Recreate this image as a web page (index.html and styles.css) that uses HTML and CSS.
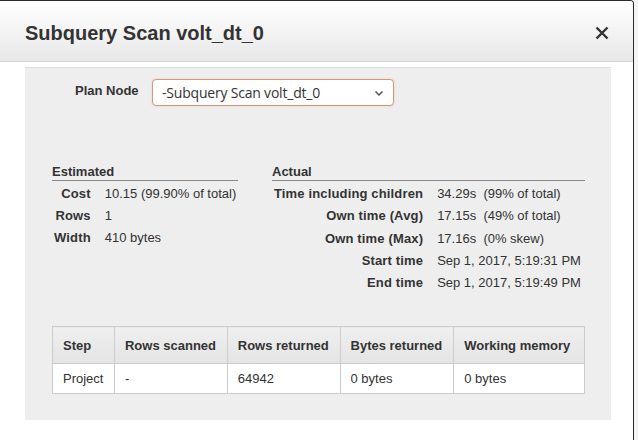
FILE: index.html
```html
<!DOCTYPE html>
<html>
<head>
<meta charset="utf-8">
<link rel="stylesheet" href="styles.css">
</head>
<body>
<div class="modal">
  <div class="header">
    <h1 class="title">Subquery Scan volt_dt_0</h1>
    <svg class="close" width="14" height="14" viewBox="0 0 14 14"><path d="M1.5 1.5 L12.5 12.5 M12.5 1.5 L1.5 12.5" stroke="#333" stroke-width="2.4" fill="none"/></svg>
  </div>
  <div class="body">
    <div class="panel">
      <div class="plan-row">
        <span class="plan-label">Plan Node</span>
        <div class="select">
          <span>-Subquery Scan volt_dt_0</span>
          <svg class="chev" width="10" height="7" viewBox="0 0 10 7"><path d="M1.5 1.5 L5 5 L8.5 1.5" fill="none" stroke="#555" stroke-width="1.5"/></svg>
        </div>
      </div>
      <div class="stats">
        <div class="sec est">
          <div class="sec-head">Estimated</div>
          <div class="grid">
            <span class="k">Cost</span><span class="v">10.15 (99.90% of total)</span>
            <span class="k">Rows</span><span class="v">1</span>
            <span class="k">Width</span><span class="v">410 bytes</span>
          </div>
        </div>
        <div class="sec act">
          <div class="sec-head">Actual</div>
          <div class="grid">
            <span class="k">Time including children</span><span class="v">34.29s&nbsp; (99% of total)</span>
            <span class="k">Own time (Avg)</span><span class="v">17.15s&nbsp; (49% of total)</span>
            <span class="k">Own time (Max)</span><span class="v">17.16s&nbsp; (0% skew)</span>
            <span class="k">Start time</span><span class="v">Sep 1, 2017, 5:19:31 PM</span>
            <span class="k">End time</span><span class="v">Sep 1, 2017, 5:19:49 PM</span>
          </div>
        </div>
      </div>
      <table class="steps">
        <thead>
          <tr><th class="c1">Step</th><th class="c2">Rows scanned</th><th class="c3">Rows returned</th><th class="c4">Bytes returned</th><th class="c5">Working memory</th></tr>
        </thead>
        <tbody>
          <tr><td>Project</td><td>-</td><td>64942</td><td>0 bytes</td><td>0 bytes</td></tr>
        </tbody>
      </table>
    </div>
  </div>
</div>
</body>
</html>
```
FILE: styles.css
```css
* { box-sizing: border-box; }
html, body { margin: 0; padding: 0; }
body {
  background: #f4f4f4;
  font-family: "Liberation Sans", Arial, sans-serif;
  color: #333;
  width: 638px;
  height: 440px;
  overflow: hidden;
}
.modal {
  width: 634px;
  height: 440px;
  background: #fff;
  border-top: 1px solid #2a2a2a;
  border-right: 1px solid #2a2a2a;
  border-top-right-radius: 4px;
  overflow: hidden;
}
.header {
  height: 61px;
  display: flex;
  align-items: center;
  justify-content: space-between;
  padding: 4px 24px 0 25px;
  background: linear-gradient(#ffffff, #e8e8e8);
  border-bottom: 1px solid #d3d3d3;
}
.title {
  margin: 0;
  font-size: 20px;
  font-weight: bold;
  color: #333;
}
.close { display: block; }
.body {
  padding: 5px 22px 0 25px;
}
.panel {
  height: 353px;
  background: #eeeeee;
  border-top: 1px solid #dcdcdc;
  padding: 11px 26px 0 27px;
}
.plan-row {
  display: flex;
  align-items: center;
  padding-left: 23px;
}
.plan-label {
  font-weight: bold;
  font-size: 13px;
  width: 77px;
  margin-top: -4px;
}
.select {
  width: 242px;
  height: 27px;
  background: #fff;
  border: 1px solid #d4967c;
  border-radius: 4px;
  box-shadow: 0 0 2px rgba(220, 120, 80, 0.35);
  display: flex;
  align-items: center;
  justify-content: space-between;
  padding: 0 9px 0 9px;
  font-family: "Open Sans", "DejaVu Sans", sans-serif;
  font-size: 14px;
  color: #333;
  letter-spacing: -0.2px;
}
.chev { margin-top: 1px; }
.stats {
  display: flex;
  gap: 34px;
  margin-top: 58px;
  font-size: 13px;
}
.est { width: 186px; }
.act { width: 313px; }
.sec-head {
  font-weight: bold;
  border-bottom: 1px solid #888;
  padding-bottom: 1px;
  line-height: 15px;
}
.grid {
  display: grid;
  grid-template-columns: auto 1fr;
  column-gap: 14px;
  row-gap: 7px;
  margin-top: 5px;
  line-height: 15px;
}
.k {
  font-weight: bold;
  text-align: right;
  padding-left: 2px;
  letter-spacing: 0.15px;
}
.act .grid { row-gap: 7.3px; }
.steps {
  margin-top: 36px;
  width: 533px;
  border-collapse: collapse;
  font-size: 13px;
  background: #fff;
}
.steps th, .steps td {
  border: 1px solid #cccccc;
  text-align: left;
  padding: 0 10px;
}
.steps th {
  height: 37px;
  font-weight: bold;
  background: linear-gradient(#efefef, #e4e4e4);
}
.steps td { height: 30px; }
.c1 { width: 62px; }
.c2 { width: 113px; }
.c3 { width: 113px; }
.c4 { width: 114px; }
.c5 { width: 131px; }
```
